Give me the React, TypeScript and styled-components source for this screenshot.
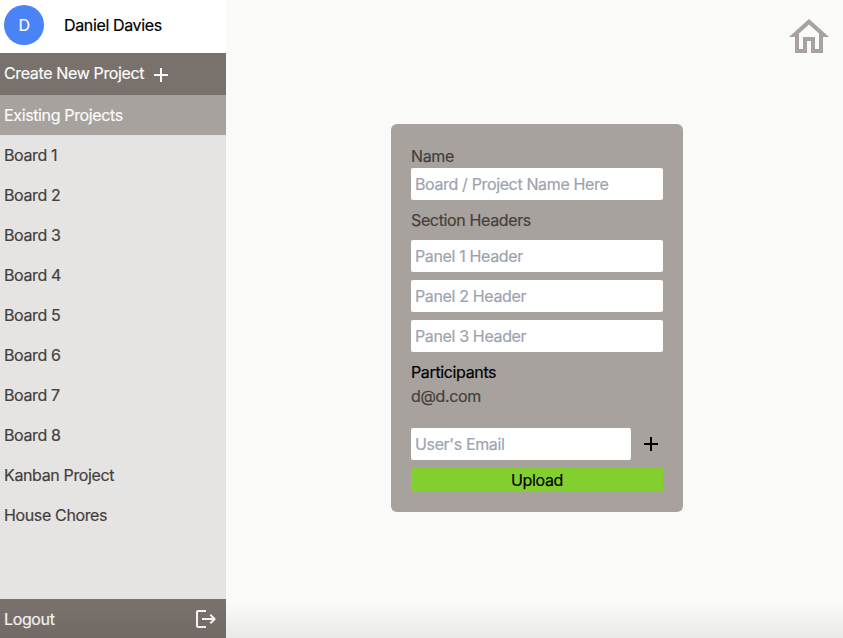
import React from "react";
import styled, { createGlobalStyle } from "styled-components";
import { MdAdd, MdLogout, MdOutlineHome } from "react-icons/md";

const GlobalStyle = createGlobalStyle`
  *, *::before, *::after { box-sizing: border-box; }
  body {
    margin: 0;
    overflow: hidden;
    font-family: Inter, "Liberation Sans", sans-serif;
    font-size: 16px;
    line-height: 24px;
    letter-spacing: -0.36px;
    -webkit-text-stroke: 0.2px;
    color: #000;
  }
  svg { display: block; }
`;

const Page = styled.div`
  position: relative;
  display: flex;
  width: 100%;
  height: 100vh;
  background: #fafaf9;
`;

const BottomShade = styled.div`
  position: absolute;
  inset: auto 0 0 0;
  height: 34px;
  pointer-events: none;
  background: linear-gradient(to bottom, rgba(0, 0, 0, 0), rgba(0, 0, 0, 0.07));
`;

const Sidebar = styled.aside`
  display: flex;
  flex-direction: column;
  flex: 0 0 226px;
  background: #e6e4e2;
`;

const Profile = styled.header`
  display: flex;
  align-items: center;
  gap: 20px;
  height: 53px;
  padding: 0 4px 3px;
  background: #fff;
`;

const Avatar = styled.div`
  display: grid;
  place-items: center;
  width: 40px;
  height: 40px;
  border-radius: 50%;
  background: #4a83f6;
  color: #fafaf9;
`;

const CreateButton = styled.button`
  display: flex;
  align-items: center;
  gap: 5px;
  height: 42px;
  padding: 2px 4px 0;
  border: 0;
  background: #79716c;
  color: #fafaf9;
  font: inherit;
  letter-spacing: inherit;

  span { padding-bottom: 4px; }
`;

const ListHeading = styled.div`
  height: 40px;
  padding: 8px 4px;
  background: #a7a29d;
  color: #fafaf9;
`;

const BoardList = styled.nav`
  flex: 1;
`;

const BoardItem = styled.div`
  height: 40px;
  padding: 8px 4px;
  color: #44403c;
`;

const LogoutBar = styled.button`
  display: flex;
  align-items: center;
  justify-content: space-between;
  height: 39px;
  padding: 1px 8px 0 4px;
  border: 0;
  background: #79716c;
  color: #fafaf9;
  font: inherit;
  letter-spacing: inherit;
`;

const Main = styled.main`
  display: flex;
  flex-direction: column;
  flex: 1;
`;

const TopBar = styled.div`
  display: flex;
  justify-content: flex-end;
  height: 124px;
  padding: 13px 10px 0 0;
  color: #a7a29d;
`;

const Card = styled.form`
  display: flex;
  flex-direction: column;
  width: 292px;
  height: 388px;
  margin-left: 165px;
  padding: 20px;
  border-radius: 6px;
  background: #a7a29d;
  color: #44403c;
`;

const Stack = styled.div`
  display: flex;
  flex-direction: column;
  gap: 8px;
  margin: 8px 0;
`;

const Strong = styled.div`
  color: #000;
`;

const Field = styled.input`
  width: 100%;
  min-width: 0;
  height: 32px;
  padding: 4px;
  border: 0;
  border-radius: 2px;
  background: #fff;
  font: inherit;
  letter-spacing: inherit;

  &::placeholder {
    color: #9ca3af;
    opacity: 1;
  }
`;

const EmailRow = styled.div`
  display: flex;
  align-items: center;
  gap: 8px;
  margin: 20px 0 8px;
  color: #000;

  svg { flex: none; }
`;

const UploadButton = styled.button`
  height: 24px;
  padding: 0;
  border: 0;
  background: #84cf30;
  color: #000;
  font: inherit;
  letter-spacing: inherit;
`;

const boards = [
  "Board 1",
  "Board 2",
  "Board 3",
  "Board 4",
  "Board 5",
  "Board 6",
  "Board 7",
  "Board 8",
  "Kanban Project",
  "House Chores",
];

export default function App() {
  return (
    <Page>
      <GlobalStyle />
      <Sidebar>
        <Profile>
          <Avatar>D</Avatar>
          <span>Daniel Davies</span>
        </Profile>
        <CreateButton>
          <span>Create New Project</span>
          <MdAdd size={24} />
        </CreateButton>
        <ListHeading>Existing Projects</ListHeading>
        <BoardList>
          {boards.map((name) => (
            <BoardItem key={name}>{name}</BoardItem>
          ))}
        </BoardList>
        <LogoutBar>
          <span>Logout</span>
          <MdLogout size={24} />
        </LogoutBar>
      </Sidebar>
      <Main>
        <TopBar>
          <MdOutlineHome size={48} />
        </TopBar>
        <Card>
          <div>Name</div>
          <Field placeholder="Board / Project Name Here" />
          <Stack>
            <div>Section Headers</div>
            <Field placeholder="Panel 1 Header" />
            <Field placeholder="Panel 2 Header" />
            <Field placeholder="Panel 3 Header" />
          </Stack>
          <Strong>Participants</Strong>
          <div>d@d.com</div>
          <EmailRow>
            <Field placeholder="User's Email" />
            <MdAdd size={24} />
          </EmailRow>
          <UploadButton type="button">Upload</UploadButton>
        </Card>
      </Main>
      <BottomShade />
    </Page>
  );
}
